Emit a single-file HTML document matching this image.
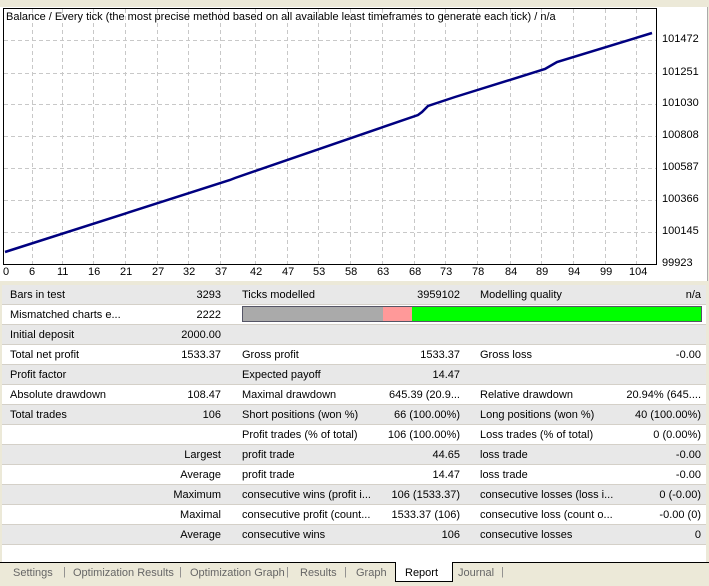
<!DOCTYPE html><html><head><style>
body{margin:0;width:709px;height:586px;background:#ece9d8;font-family:"Liberation Sans",sans-serif;font-size:11px;position:relative;overflow:hidden;color:#000}
.panel{position:absolute;left:0;top:0;width:707px;height:281px;background:#fff;border-right:1px solid #aaa}
.top{position:absolute;left:0;top:0;width:709px;height:7px;background:#ece9d8}
.t{position:absolute;white-space:nowrap}
.row{position:absolute;left:2px;width:704px;height:20px;border-bottom:1px solid #d4d0c8;box-sizing:border-box}
.g{background:#e8e8e8}.w{background:#fff}
.row span{position:absolute;top:4px;white-space:nowrap}
.r{text-align:right}
.tabs{position:absolute;top:563px;left:0;width:709px;height:23px}
</style></head><body>
<div class="panel"></div><div class="top"></div>
<svg style="position:absolute;left:0;top:0" width="709" height="282">
<g stroke="#c8c8c8" stroke-dasharray="4,3" stroke-width="1">
<line x1="32.5" y1="9" x2="32.5" y2="264"/><line x1="62.5" y1="9" x2="62.5" y2="264"/><line x1="93.5" y1="9" x2="93.5" y2="264"/><line x1="125.5" y1="9" x2="125.5" y2="264"/><line x1="157.5" y1="9" x2="157.5" y2="264"/><line x1="188.5" y1="9" x2="188.5" y2="264"/><line x1="220.5" y1="9" x2="220.5" y2="264"/><line x1="255.5" y1="9" x2="255.5" y2="264"/><line x1="287.5" y1="9" x2="287.5" y2="264"/><line x1="318.5" y1="9" x2="318.5" y2="264"/><line x1="350.5" y1="9" x2="350.5" y2="264"/><line x1="382.5" y1="9" x2="382.5" y2="264"/><line x1="414.5" y1="9" x2="414.5" y2="264"/><line x1="445.5" y1="9" x2="445.5" y2="264"/><line x1="477.5" y1="9" x2="477.5" y2="264"/><line x1="510.5" y1="9" x2="510.5" y2="264"/><line x1="541.5" y1="9" x2="541.5" y2="264"/><line x1="573.5" y1="9" x2="573.5" y2="264"/><line x1="605.5" y1="9" x2="605.5" y2="264"/><line x1="636.5" y1="9" x2="636.5" y2="264"/>
<line x1="4" y1="40.5" x2="656" y2="40.5"/><line x1="4" y1="73.5" x2="656" y2="73.5"/><line x1="4" y1="104.5" x2="656" y2="104.5"/><line x1="4" y1="136.5" x2="656" y2="136.5"/><line x1="4" y1="168.5" x2="656" y2="168.5"/><line x1="4" y1="200.5" x2="656" y2="200.5"/><line x1="4" y1="232.5" x2="656" y2="232.5"/>
</g>
<rect x="3.5" y="8.5" width="653" height="256" fill="none" stroke="#000"/>
<polyline fill="none" stroke="#000080" stroke-width="2.5" points="5,252 230,180 235,178 418,115 422,112 428,106 455,97 545,69 557,62 652,33"/>
</svg>
<div class="t" style="left:6px;top:11px">Balance / Every tick (the most precise method based on all available least timeframes to generate each tick) / n/a</div>
<div class="t" style="left:662px;top:33px">101472</div><div class="t" style="left:662px;top:66px">101251</div><div class="t" style="left:662px;top:97px">101030</div><div class="t" style="left:662px;top:129px">100808</div><div class="t" style="left:662px;top:161px">100587</div><div class="t" style="left:662px;top:193px">100366</div><div class="t" style="left:662px;top:225px">100145</div><div class="t" style="left:662px;top:257px">99923</div>
<div style="position:absolute;top:266px;left:0">
<span class="t" style="left:3px">0</span><span class="t" style="left:29px">6</span><span class="t" style="left:57px">11</span><span class="t" style="left:88px">16</span><span class="t" style="left:120px">21</span><span class="t" style="left:152px">27</span><span class="t" style="left:183px">32</span><span class="t" style="left:215px">37</span><span class="t" style="left:250px">42</span><span class="t" style="left:282px">47</span><span class="t" style="left:313px">53</span><span class="t" style="left:345px">58</span><span class="t" style="left:377px">63</span><span class="t" style="left:409px">68</span><span class="t" style="left:440px">73</span><span class="t" style="left:472px">78</span><span class="t" style="left:505px">84</span><span class="t" style="left:536px">89</span><span class="t" style="left:568px">94</span><span class="t" style="left:600px">99</span><span class="t" style="left:629px">104</span></div>

<div class="row g" style="top:285px"><span style="left:8px">Bars in test</span><span class="r" style="right:485px">3293</span><span style="left:240px">Ticks modelled</span><span style="right:246px">3959102</span><span style="left:478px">Modelling quality</span><span style="right:5px">n/a</span></div>
<div class="row w" style="top:305px"><span style="left:8px">Mismatched charts e...</span><span style="right:485px">2222</span>
<div style="position:absolute;left:240px;top:1px;width:460px;height:16px;border:1px solid #556;box-sizing:border-box;background:#0f0"><div style="position:absolute;left:0;top:0;width:140px;height:14px;background:#aaa"></div><div style="position:absolute;left:140px;top:0;width:29px;height:14px;background:#f99"></div></div></div>
<div class="row g" style="top:325px"><span style="left:8px">Initial deposit</span><span style="right:485px">2000.00</span></div>
<div class="row w" style="top:345px"><span style="left:8px">Total net profit</span><span style="right:485px">1533.37</span><span style="left:240px">Gross profit</span><span style="right:246px">1533.37</span><span style="left:478px">Gross loss</span><span style="right:5px">-0.00</span></div>
<div class="row g" style="top:365px"><span style="left:8px">Profit factor</span><span style="left:240px">Expected payoff</span><span style="right:246px">14.47</span></div>
<div class="row w" style="top:385px"><span style="left:8px">Absolute drawdown</span><span style="right:485px">108.47</span><span style="left:240px">Maximal drawdown</span><span style="right:246px">645.39 (20.9...</span><span style="left:478px">Relative drawdown</span><span style="right:5px">20.94% (645....</span></div>
<div class="row g" style="top:405px"><span style="left:8px">Total trades</span><span style="right:485px">106</span><span style="left:240px">Short positions (won %)</span><span style="right:246px">66 (100.00%)</span><span style="left:478px">Long positions (won %)</span><span style="right:5px">40 (100.00%)</span></div>
<div class="row w" style="top:425px"><span style="left:240px">Profit trades (% of total)</span><span style="right:246px">106 (100.00%)</span><span style="left:478px">Loss trades (% of total)</span><span style="right:5px">0 (0.00%)</span></div>
<div class="row g" style="top:445px"><span style="right:485px">Largest</span><span style="left:240px">profit trade</span><span style="right:246px">44.65</span><span style="left:478px">loss trade</span><span style="right:5px">-0.00</span></div>
<div class="row w" style="top:465px"><span style="right:485px">Average</span><span style="left:240px">profit trade</span><span style="right:246px">14.47</span><span style="left:478px">loss trade</span><span style="right:5px">-0.00</span></div>
<div class="row g" style="top:485px"><span style="right:485px">Maximum</span><span style="left:240px">consecutive wins (profit i...</span><span style="right:246px">106 (1533.37)</span><span style="left:478px">consecutive losses (loss i...</span><span style="right:5px">0 (-0.00)</span></div>
<div class="row w" style="top:505px"><span style="right:485px">Maximal</span><span style="left:240px">consecutive profit (count...</span><span style="right:246px">1533.37 (106)</span><span style="left:478px">consecutive loss (count o...</span><span style="right:5px">-0.00 (0)</span></div>
<div class="row g" style="top:525px"><span style="right:485px">Average</span><span style="left:240px">consecutive wins</span><span style="right:246px">106</span><span style="left:478px">consecutive losses</span><span style="right:5px">0</span></div>
<div style="position:absolute;left:2px;top:545px;width:704px;height:17px;background:#fff"></div>
<div style="position:absolute;left:0;top:562px;width:709px;height:1px;background:#000"></div>
<div class="tabs" style="color:#666">
<span class="t" style="left:13px;top:4px">Settings</span><span class="t" style="left:63px;top:3px;color:#888">|</span>
<span class="t" style="left:73px;top:4px">Optimization Results</span><span class="t" style="left:179px;top:3px;color:#888">|</span>
<span class="t" style="left:190px;top:4px">Optimization Graph</span><span class="t" style="left:286px;top:3px;color:#888">|</span>
<span class="t" style="left:300px;top:4px">Results</span><span class="t" style="left:344px;top:3px;color:#888">|</span>
<span class="t" style="left:356px;top:4px">Graph</span>
<div style="position:absolute;left:395px;top:-1px;width:56px;height:19px;background:#fff;border:1px solid #000;border-top:none"></div>
<span class="t" style="left:405px;top:4px;color:#000">Report</span>
<span class="t" style="left:458px;top:4px">Journal</span><span class="t" style="left:501px;top:3px;color:#888">|</span>
</div>
</body></html>
